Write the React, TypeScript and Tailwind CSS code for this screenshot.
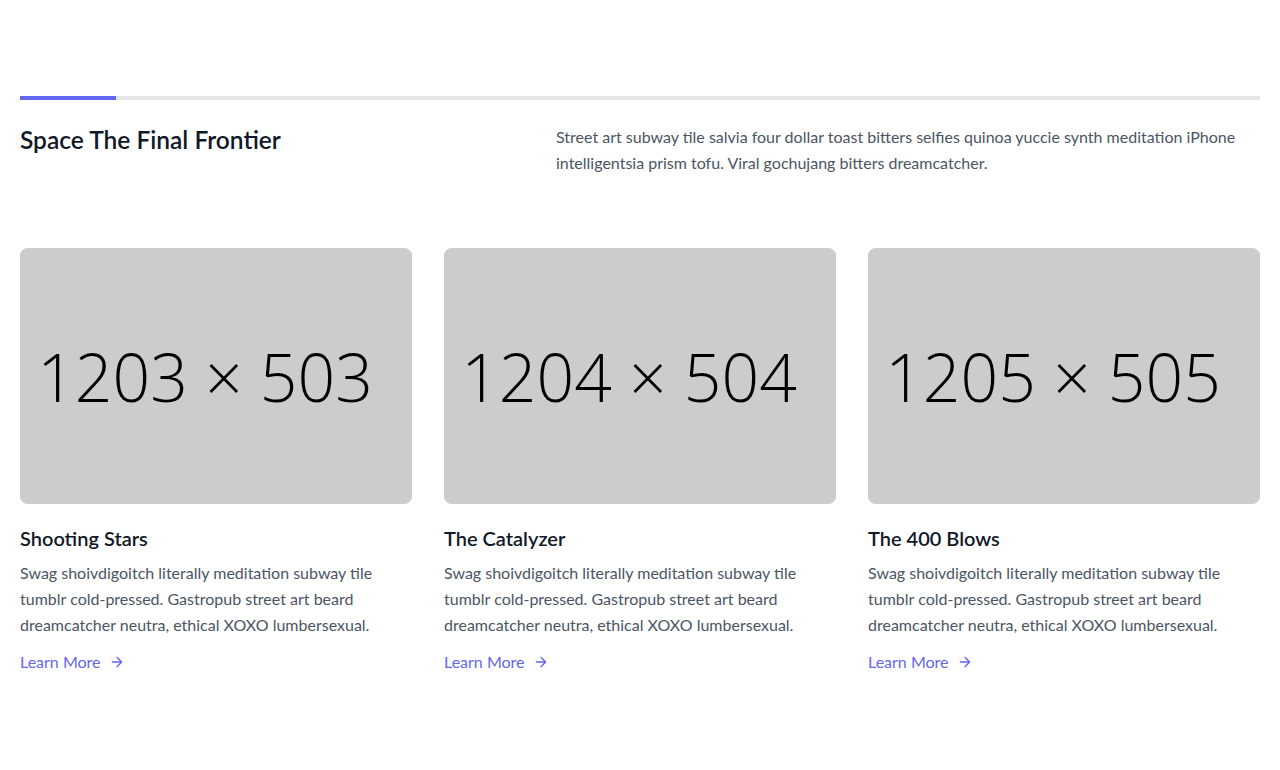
const posts = [
  { size: '1203 × 503', title: 'Shooting Stars' },
  { size: '1204 × 504', title: 'The Catalyzer' },
  { size: '1205 × 505', title: 'The 400 Blows' },
];

const body =
  'Swag shoivdigoitch literally meditation subway tile tumblr cold-pressed. Gastropub street art beard dreamcatcher neutra, ethical XOXO lumbersexual.';

export default function App() {
  return (
    <section className="bg-white text-[#4b5563] font-['Lato',sans-serif]">
      <div className="px-5 py-24 mx-auto">
        <div className="flex flex-col">
          <div className="h-1 bg-[#e5e7eb] overflow-hidden">
            <div className="w-24 h-full bg-[#6366f1]"></div>
          </div>
          <div className="flex flex-row py-6 mb-12">
            <h1 className="w-2/5 text-[#111827] font-semibold text-[24.5px] leading-8">Space The Final Frontier</h1>
            <p className="w-3/5 leading-relaxed text-base pl-10">
              Street art subway tile salvia four dollar toast bitters selfies quinoa yuccie synth meditation
              iPhone intelligentsia prism tofu. Viral gochujang bitters dreamcatcher.
            </p>
          </div>
        </div>
        <div className="flex flex-wrap -m-4">
          {posts.map(post => (
            <div key={post.title} className="p-4 w-1/3">
              <div className="rounded-lg h-64 overflow-hidden bg-[#cccccc] flex items-center justify-center pr-[22px]">
                <span className="font-['Open_Sans',sans-serif] font-light text-[66px] text-black whitespace-nowrap">
                  {post.size}
                </span>
              </div>
              <h2 className="text-xl font-semibold text-[#111827] mt-5">{post.title}</h2>
              <p className="text-base leading-relaxed mt-2">{body}</p>
              <a className="text-[#6366f1] inline-flex items-center mt-3">
                Learn More
                <svg
                  fill="none"
                  stroke="currentColor"
                  strokeLinecap="round"
                  strokeLinejoin="round"
                  strokeWidth="2"
                  className="w-4 h-4 ml-2"
                  viewBox="0 0 24 24"
                >
                  <path d="M5 12h14M12 5l7 7-7 7"></path>
                </svg>
              </a>
            </div>
          ))}
        </div>
      </div>
    </section>
  );
}
